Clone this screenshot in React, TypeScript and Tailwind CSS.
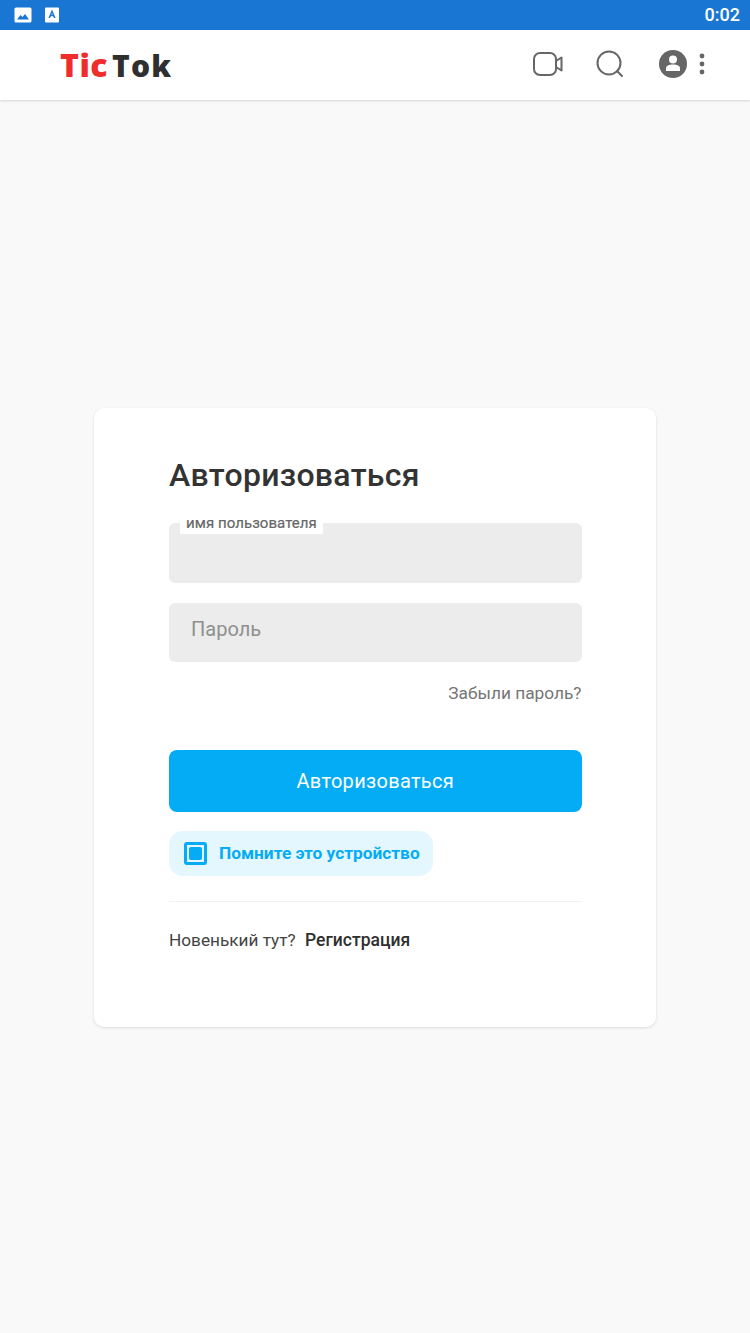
export default function App() {
  return (
    <div className="w-[750px] h-[1333px] flex flex-col bg-[#f9f9f9] font-['Roboto',sans-serif] overflow-hidden">
      <div className="h-[30px] shrink-0 bg-[#1976d2] flex items-center pl-[14px] pr-[10px]">
        <svg width="18" height="16" viewBox="0 0 18 16">
          <rect x="0.5" y="0.5" width="17" height="15" rx="1.5" fill="#fff" />
          <path d="M3 12.5 L6.5 8 L8.5 10 L11 7 L15 12.5 Z" fill="#1976d2" />
        </svg>
        <svg className="ml-[13px]" width="14" height="16" viewBox="0 0 14 16">
          <rect x="0" y="0.5" width="14" height="15" rx="1" fill="#fff" />
          <path d="M7 2.5 L10.6 11 H8.9 L8.2 9.2 H5.8 L5.1 11 H3.4 Z M6.4 7.8 H7.6 L7 6 Z" fill="#1976d2" fillRule="evenodd" />
        </svg>
        <span className="ml-auto text-white text-[18px] font-medium leading-none">0:02</span>
      </div>
      <div className="h-[70px] shrink-0 bg-white flex items-center pl-[60px] pr-[45px] shadow-[0_1px_2px_rgba(0,0,0,0.15)]">
        <div className="font-['Open_Sans',sans-serif] font-extrabold text-[32px] leading-none tracking-[0.5px] flex items-baseline mb-[1px]">
          <span className="text-[#f02d2d]">Tic</span>
          <span className="text-[#2f2f2f] ml-[4px] text-[30px] tracking-[1.2px]">Tok</span>
        </div>
        <svg className="ml-auto mb-[2px]" width="30" height="26" viewBox="0 0 30 26" fill="none" stroke="#666" strokeWidth="2">
          <rect x="1" y="2" width="22" height="22" rx="6" />
          <path d="M23 10 L28.5 6.5 V19.5 L23 16" strokeLinejoin="round" />
        </svg>
        <svg className="ml-[33px] mb-[2px]" width="28" height="28" viewBox="0 0 28 28" fill="none" stroke="#666" strokeWidth="2">
          <circle cx="13" cy="13" r="11.5" />
          <path d="M21 21 L26 26" strokeLinecap="round" />
        </svg>
        <svg className="ml-[35px] mb-[2px]" width="28" height="28" viewBox="0 0 28 28">
          <circle cx="14" cy="14" r="14" fill="#666" />
          <circle cx="14" cy="9.5" r="4" fill="#fff" />
          <path d="M7 21 V18.5 C7 15.5 10 14.5 14 14.5 C18 14.5 21 15.5 21 18.5 V21 Z" fill="#fff" />
        </svg>
        <svg className="ml-[12px] mb-[2px]" width="6" height="22" viewBox="0 0 6 22" fill="#666">
          <circle cx="3" cy="3" r="2.4" />
          <circle cx="3" cy="11" r="2.4" />
          <circle cx="3" cy="19" r="2.4" />
        </svg>
      </div>
      <div className="flex-1 flex flex-col items-center pt-[308px]">
        <div className="w-[562px] h-[619px] bg-white rounded-[10px] shadow-[0_1px_3px_rgba(0,0,0,0.12)] pl-[75px] pr-[74.5px] pt-[45px] flex flex-col">
          <h1 className="text-[32px] leading-[44px] font-medium tracking-[0.3px] text-[#333]">Авторизоваться</h1>
          <div className="relative mt-[26px] h-[60px] rounded-[6px] bg-[#ececec]">
            <span className="absolute left-[11px] top-[-8px] h-[19px] px-[6px] bg-white text-[15px] tracking-[0.06px] leading-[17px] text-[#666] [-webkit-text-stroke:0.2px_#666]">имя пользователя</span>
          </div>
          <div className="mt-[19.5px] h-[59.5px] rounded-[6px] bg-[#ececec] pl-[22px] pt-[13.5px] text-[20px] leading-[26px] text-[#8f8f8f]">Пароль</div>
          <div className="mt-[20px] text-right text-[17.3px] leading-[22px] text-[#757575]">Забыли пароль?</div>
          <button className="mt-[46px] h-[62px] rounded-[8px] bg-[#03acf5] text-white text-[20px] tracking-[0.3px]">Авторизоваться</button>
          <div className="mt-[19px] h-[45px] w-[264px] rounded-[14px] bg-[#e4f6fe] flex items-center pl-[15px]">
            <div className="w-[23px] h-[23px] rounded-[3px] border-[3px] border-[#03acf5] flex items-center justify-center">
              <div className="w-[13px] h-[13px] rounded-[2px] bg-[#03acf5]" />
            </div>
            <span className="ml-[12px] text-[17.3px] font-bold text-[#03acf5]">Помните это устройство</span>
          </div>
          <div className="mt-[25px] h-px bg-[#f2f2f2]" />
          <div className="mt-[27px] flex text-[17.2px] leading-[22px]">
            <span className="text-[#444]">Новенький тут?</span>
            <span className="ml-[9.5px] text-[17.5px] font-medium text-[#2f2f2f]">Регистрация</span>
          </div>
        </div>
      </div>
    </div>
  );
}
